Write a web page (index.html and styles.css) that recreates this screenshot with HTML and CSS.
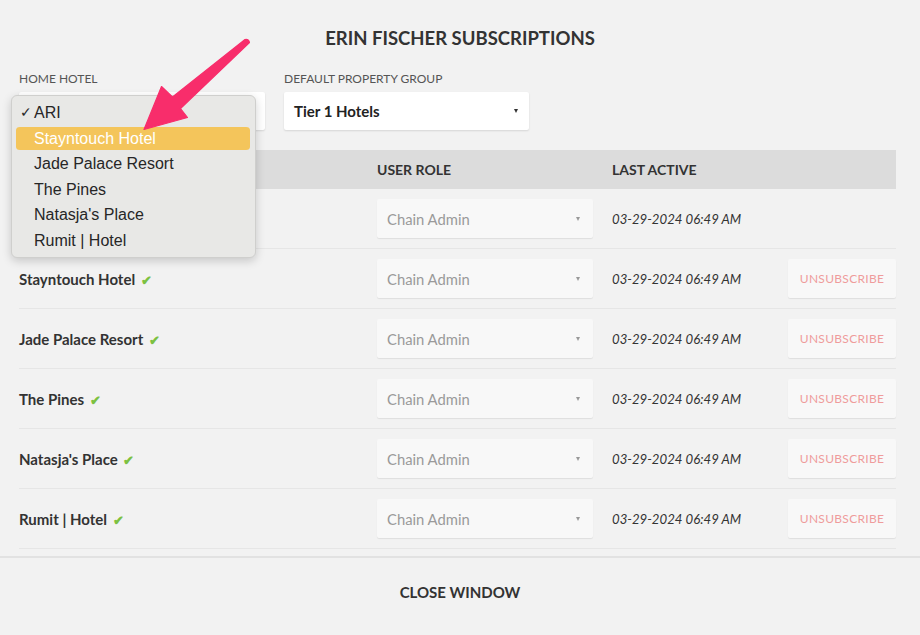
FILE: index.html
```html
<!DOCTYPE html>
<html lang="en">
<head>
<meta charset="utf-8">
<title>Erin Fischer Subscriptions</title>
<link rel="stylesheet" href="styles.css">
</head>
<body>
<div class="modal">
  <div class="content">
    <h1 class="title">ERIN FISCHER SUBSCRIPTIONS</h1>
    <div class="filters">
      <div class="field home">
        <div class="label">HOME HOTEL</div>
        <div class="select"><span>ARI</span><span class="caret dark"></span></div>
      </div>
      <div class="field group">
        <div class="label">DEFAULT PROPERTY GROUP</div>
        <div class="select"><span>Tier 1 Hotels</span><span class="caret dark"></span></div>
      </div>
    </div>

    <div class="table">
      <div class="thead">
        <div></div>
        <div>USER ROLE</div>
        <div>LAST ACTIVE</div>
        <div></div>
      </div>
      <div class="row">
        <div class="name">ARI <span class="tick">✔</span></div>
        <div><div class="role"><span>Chain Admin</span><span class="caret"></span></div></div>
        <div class="date">03-29-2024 06:49 AM</div>
        <div></div>
      </div>
      <div class="row">
        <div class="name">Stayntouch Hotel <span class="tick">✔</span></div>
        <div><div class="role"><span>Chain Admin</span><span class="caret"></span></div></div>
        <div class="date">03-29-2024 06:49 AM</div>
        <div><button class="unsub">UNSUBSCRIBE</button></div>
      </div>
      <div class="row">
        <div class="name">Jade Palace Resort <span class="tick">✔</span></div>
        <div><div class="role"><span>Chain Admin</span><span class="caret"></span></div></div>
        <div class="date">03-29-2024 06:49 AM</div>
        <div><button class="unsub">UNSUBSCRIBE</button></div>
      </div>
      <div class="row">
        <div class="name">The Pines <span class="tick">✔</span></div>
        <div><div class="role"><span>Chain Admin</span><span class="caret"></span></div></div>
        <div class="date">03-29-2024 06:49 AM</div>
        <div><button class="unsub">UNSUBSCRIBE</button></div>
      </div>
      <div class="row">
        <div class="name">Natasja's Place <span class="tick">✔</span></div>
        <div><div class="role"><span>Chain Admin</span><span class="caret"></span></div></div>
        <div class="date">03-29-2024 06:49 AM</div>
        <div><button class="unsub">UNSUBSCRIBE</button></div>
      </div>
      <div class="row">
        <div class="name">Rumit | Hotel <span class="tick">✔</span></div>
        <div><div class="role"><span>Chain Admin</span><span class="caret"></span></div></div>
        <div class="date">03-29-2024 06:49 AM</div>
        <div><button class="unsub">UNSUBSCRIBE</button></div>
      </div>
    </div>
  </div>

  <div class="footer">CLOSE WINDOW</div>

  <ul class="menu">
    <li class="checked"><span class="check">✓</span>ARI</li>
    <li class="active">Stayntouch Hotel</li>
    <li>Jade Palace Resort</li>
    <li>The Pines</li>
    <li>Natasja's Place</li>
    <li>Rumit | Hotel</li>
  </ul>

  <svg class="arrow" width="130" height="110" viewBox="130 30 130 110" xmlns="http://www.w3.org/2000/svg">
    <path d="M245 39.5 Q248.5 38.5 249.5 42.5 L180.5 108.5 L187.5 117.5 L144 129.5 L161.5 86.5 L172.5 97 Z" fill="#f82d6b" stroke="#f82d6b" stroke-width="1.2" stroke-linejoin="round"/>
  </svg>
</div>
</body>
</html>
```

FILE: styles.css
```css
* { box-sizing: border-box; }

html, body {
  margin: 0;
  padding: 0;
}

body {
  width: 920px;
  height: 635px;
  background: #f2f2f2;
  font-family: Lato, "Noto Sans", sans-serif;
  color: #333;
  overflow: hidden;
}

.modal {
  position: relative;
  height: 635px;
}

.content {
  padding: 26px 24px 0 19px;
}

.title {
  margin: 0 0 0 5px;
  text-align: center;
  font-size: 18.5px;
  line-height: 24px;
  font-weight: 700;
  color: #333;
}

.filters {
  display: flex;
  gap: 19px;
  margin-top: 22px;
}

.label {
  font-size: 12px;
  line-height: 14px;
  color: #555;
  margin-bottom: 6px;
}

.select {
  height: 38px;
  background: #fff;
  border-radius: 2px;
  box-shadow: 0 1px 2px rgba(0, 0, 0, 0.12);
  display: flex;
  align-items: center;
  justify-content: space-between;
  padding: 0 10px 0 10px;
  font-size: 15px;
  font-weight: 700;
  color: #222;
}

.home .select { width: 246px; }
.group .select { width: 245px; }

.caret {
  width: 0;
  height: 0;
  border-left: 2.5px solid transparent;
  border-right: 2.5px solid transparent;
  border-top: 4px solid #999;
  margin-right: 1px;
}

.caret.dark { border-top-color: #333; }

.table {
  margin-top: 20px;
}

.thead,
.row {
  display: grid;
  grid-template-columns: 358px 235px 176px 108px;
  align-items: center;
}

.thead {
  height: 39px;
  background: #dcdcdc;
  font-size: 14px;
  font-weight: 700;
  color: #333;
}

.row {
  height: 60px;
  border-bottom: 1px solid #e6e6e6;
}

.name {
  font-size: 15px;
  font-weight: 700;
  color: #333;
}

.tick {
  color: #7cc142;
  font-size: 13px;
  margin-left: 2px;
}

.role {
  width: 216px;
  height: 39px;
  background: #f8f8f8;
  border-radius: 2px;
  box-shadow: 0 1px 1px rgba(0, 0, 0, 0.08);
  display: flex;
  align-items: center;
  justify-content: space-between;
  padding: 0 12px 0 10px;
  font-size: 14.8px;
  color: #9a9a9a;
}

.date {
  font-size: 13.2px;
  font-style: italic;
  color: #333;
}

.unsub {
  width: 108px;
  height: 39px;
  border: 0;
  border-radius: 2px;
  background: #f8f8f8;
  box-shadow: 0 1px 1px rgba(0, 0, 0, 0.08);
  font-family: Lato, "Noto Sans", sans-serif;
  font-size: 12px;
  letter-spacing: 0.3px;
  color: #ef9c9c;
  padding: 0;
}

.footer {
  margin-top: 7px;
  border-top: 2px solid #e2e2e2;
  padding-top: 24px;
  text-align: center;
  font-size: 15px;
  line-height: 20px;
  font-weight: 700;
  color: #333;
}

.menu {
  position: absolute;
  left: 11px;
  top: 95px;
  width: 245px;
  height: 163px;
  margin: 0;
  padding: 4px 5px 5px 4px;
  list-style: none;
  background: #e8e8e6;
  border: 1px solid #cfcfcd;
  border-radius: 6px;
  box-shadow: 0 3px 10px rgba(0, 0, 0, 0.18);
  font-family: "Liberation Sans", Arial, sans-serif;
  font-size: 16px;
  color: #262626;
}

.menu li {
  height: 25.5px;
  line-height: 25.5px;
  padding-left: 18px;
  border-radius: 4px;
  position: relative;
}

.menu .check {
  position: absolute;
  left: 4px;
  top: 0;
  font-size: 14px;
}

.menu li.active {
  background: #f4c55b;
  background-clip: padding-box;
  border-top: 0.75px solid transparent;
  border-bottom: 0.75px solid transparent;
  line-height: 24px;
  color: #fff;
}

.arrow {
  position: absolute;
  left: 130px;
  top: 30px;
}
```
